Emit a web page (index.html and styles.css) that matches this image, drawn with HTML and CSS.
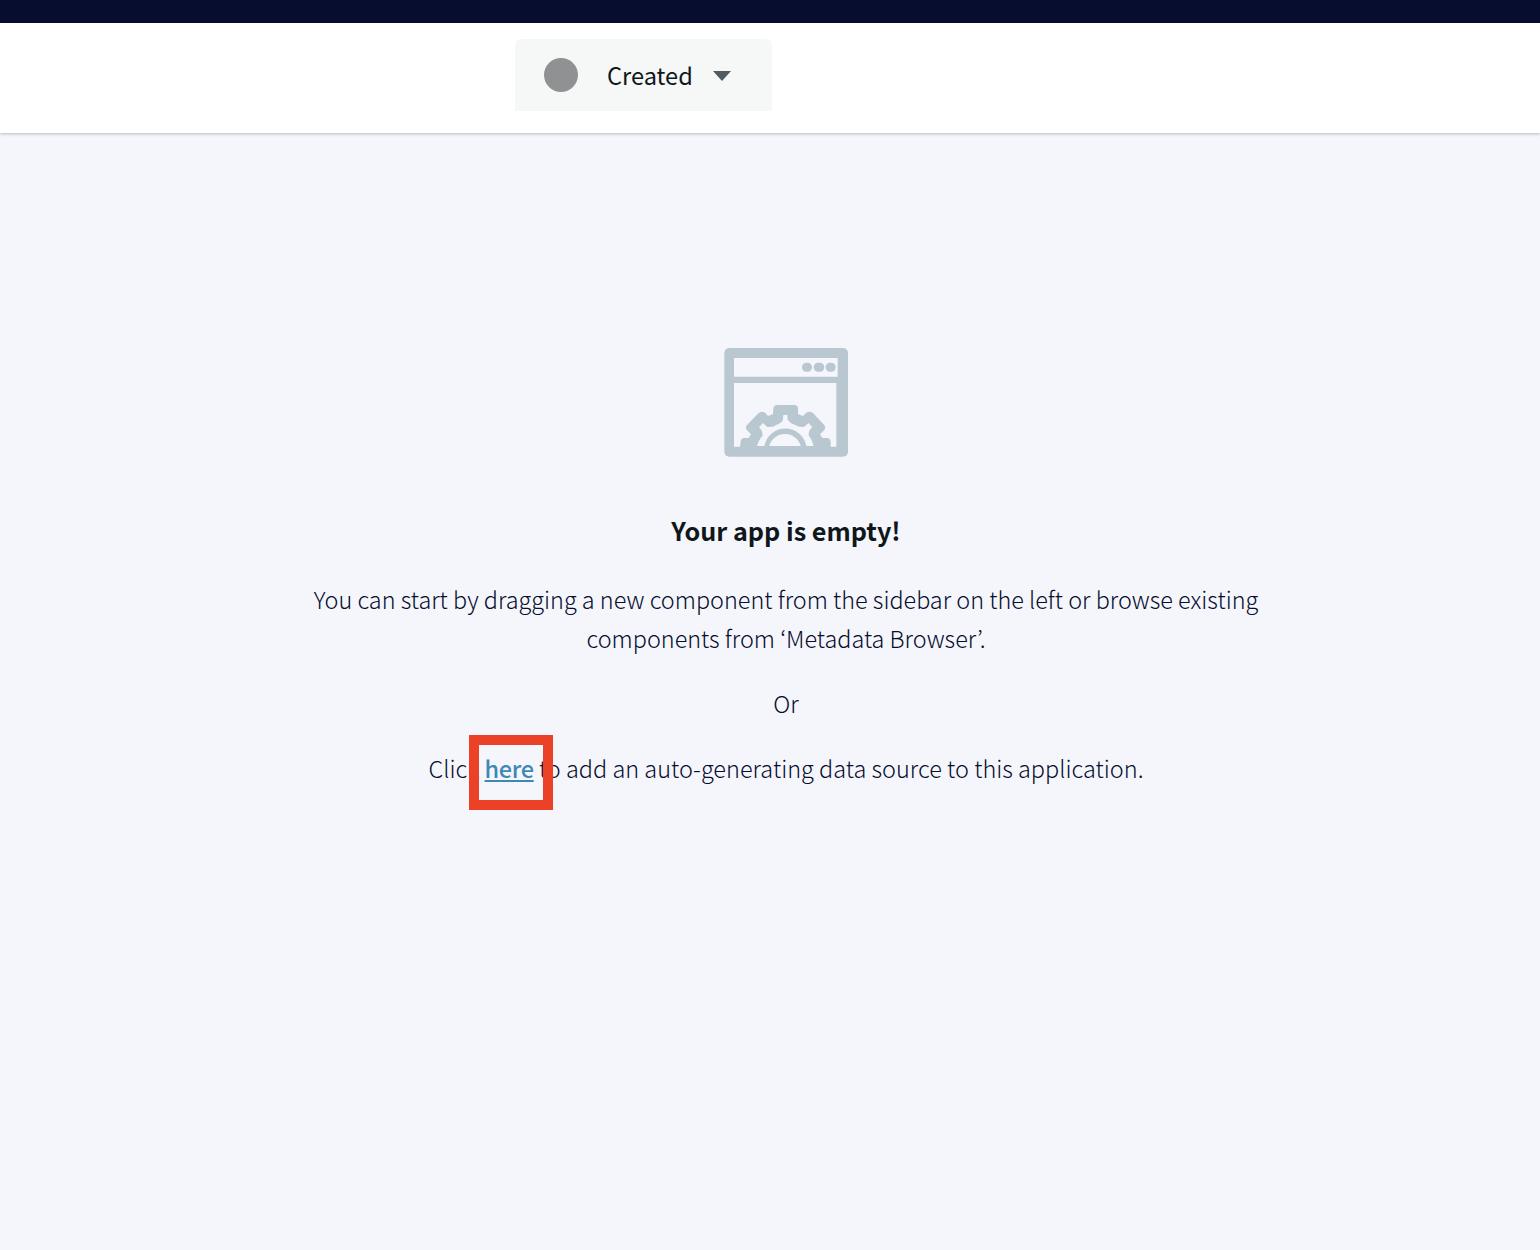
FILE: index.html
```html
<!DOCTYPE html>
<html lang="en">
<head>
<meta charset="utf-8">
<title>Application</title>
<link rel="stylesheet" href="styles.css">
</head>
<body>
<div class="topbar"></div>
<header class="header">
  <button class="status" type="button">
    <span class="status-dot"></span>
    <span class="status-label">Created</span>
    <svg class="status-caret" viewBox="0 0 18 10"><path d="M0 0H18L9 10Z"/></svg>
  </button>
</header>
<main class="empty">
  <svg class="empty-icon" viewBox="27 24 372 327">
    <rect class="solid" x="28" y="24" width="371" height="326" rx="15"/>
    <path class="hole" d="M57 54H368V110H57ZM57 129H364V320H57Z"/>
    <g class="solid">
      <rect x="261" y="68" width="30" height="27" rx="13"/>
      <rect x="296" y="68" width="32" height="27" rx="13"/>
      <rect x="332" y="68" width="30" height="27" rx="13"/>
      <path d="M75 322L77 303Q79 294 88 294H101L108 283L95 269Q90 262 96 255L130 220Q140 211 151 219L159 228L174 222L175 206Q176 195 187 195H238Q249 195 249 206V222L264 228L273 219Q284 211 294 219L327 254Q334 262 328 270L315 283L322 294H336Q347 295 347 305V322Z"/>
    </g>
    <path class="hole" d="M126 318Q134 294 143 287Q143 272 132 262L144 249L157 261Q174 263 185 254Q201 248 204 239L205 225H217L218 239Q225 250 239 254Q252 263 267 261L281 249L292 262Q280 272 281 286Q292 300 296 318H274A64 64 0 0 0 148 318ZM163 318A48 45 0 0 1 257 318Z"/>
  </svg>
  <h1 class="empty-title">Your app is empty!</h1>
  <p class="empty-text">You can start by dragging a new component from the sidebar on the left or browse existing<br>components from ‘Metadata Browser’.</p>
  <p class="empty-text">Or</p>
  <p class="empty-text empty-action">Click <span class="link-wrap"><a class="link" href="#">here</a><span class="marker"></span></span> to add an auto-generating data source to this application.</p>
</main>
</body>
</html>
```
FILE: styles.css
```css
* { box-sizing: border-box; }
body {
  margin: 0;
  min-height: 1250px;
  background: #f5f6fb;
  font-family: "Noto Sans CJK KR", "Noto Sans", sans-serif;
  color: #060d2e;
}
.topbar { height: 23px; background: #060d2e; }
.header {
  height: 110px;
  padding: 16px 0 0 515px;
  background: #fff;
  box-shadow: 0 1px 3px rgba(0, 0, 0, .24);
}
.status {
  display: flex;
  align-items: center;
  width: 257px;
  height: 72px;
  padding: 0 0 0 29px;
  border: 0;
  border-radius: 6px 6px 0 0;
  background: #f6f8f8;
  font: 400 23.6px/36px "Noto Sans CJK KR", "Noto Sans", sans-serif;
  color: #10171b;
}
.status-dot { width: 34px; height: 34px; border-radius: 50%; background: #909192; }
.status-label { width: 85px; margin: 0 20px 0 29px; white-space: nowrap; text-align: left; }
.status-caret { width: 18px; height: 10px; margin: 2px 0 0 0.5px; fill: #4f5c62; }
.empty {
  display: flex;
  flex-direction: column;
  align-items: center;
  padding: 215px 0 0 32px;
  text-align: center;
}
.empty-icon { width: 124px; height: 109px; }
.solid { fill: #b9c7d0; }
.hole { fill: #f5f6fb; }
.empty-title {
  margin: 54px 0 30px;
  font-size: 25.2px;
  line-height: 39px;
  font-weight: 600;
  color: #10171b;
}
.empty-text {
  margin: 0 0 26px;
  font-size: 23.42px;
  font-weight: 300;
  line-height: 39px;
  white-space: nowrap;
}
.empty-action { font-size: 23.47px; }
.link-wrap { position: relative; }
.link {
  font-weight: 500;
  letter-spacing: -.35px;
  color: #3f88b6;
  text-underline-offset: 2px;
  text-decoration-thickness: 2px;
}
.marker {
  position: absolute;
  left: -15.5px;
  top: -16px;
  width: 84px;
  height: 75px;
  border: 10px solid #eb4126;
}
```
